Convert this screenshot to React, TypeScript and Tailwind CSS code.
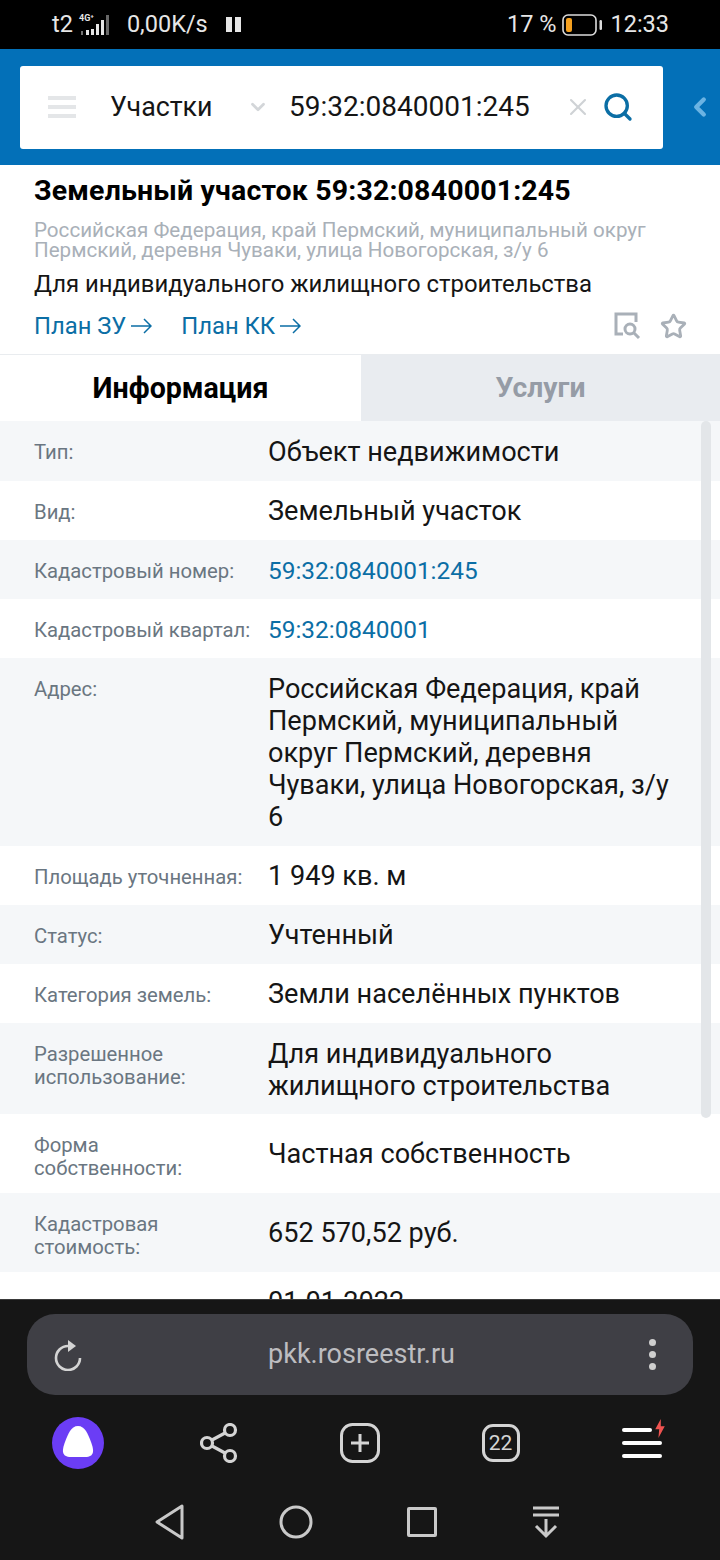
import { ReactNode } from "react";
import { ChevronDown, ChevronLeft, Search, X, Star } from "lucide-react";

interface Row {
  label: ReactNode;
  value: ReactNode;
  h: string;
  pos: string;
  link?: boolean;
}

const rows: Row[] = [
  { label: "Тип:", value: "Объект недвижимости", h: "h-[60px]", pos: "pt-[15px]" },
  { label: "Вид:", value: "Земельный участок", h: "h-[59px]", pos: "pt-[14px]" },
  { label: "Кадастровый номер:", value: "59:32:0840001:245", h: "h-[59px]", pos: "pt-[15px]", link: true },
  {
    label: <span className="whitespace-nowrap">Кадастровый квартал:</span>,
    value: "59:32:0840001",
    h: "h-[59px]",
    pos: "pt-[15px]",
    link: true,
  },
  {
    label: "Адрес:",
    value: "Российская Федерация, край Пермский, муниципальный округ Пермский, деревня Чуваки, улица Новогорская, з/у 6",
    h: "h-[188px]",
    pos: "pt-[15px]",
  },
  { label: "Площадь уточненная:", value: "1 949 кв. м", h: "h-[59px]", pos: "pt-[14px]" },
  { label: "Статус:", value: "Учтенный", h: "h-[59px]", pos: "pt-[14px]" },
  { label: "Категория земель:", value: "Земли населённых пунктов", h: "h-[59px]", pos: "pt-[14px]" },
  { label: "Разрешенное использование:", value: "Для индивидуального жилищного строительства", h: "h-[91px]", pos: "pt-[15px]" },
  { label: "Форма собственности:", value: "Частная собственность", h: "h-[79px]", pos: "self-center" },
  { label: "Кадастровая стоимость:", value: "652 570,52 руб.", h: "h-[79px]", pos: "self-center" },
  { label: "", value: "01.01.2022", h: "h-[79px]", pos: "pt-[14px]" },
];

const InfoRow = ({ row, odd }: { row: Row; odd: boolean }) => (
  <div className={`flex items-start pl-[34px] pr-[44px] ${row.h} ${odd ? "bg-white" : "bg-[#f5f7f9]"}`}>
    <div className="w-[234px] shrink-0 pt-[19.6px] pr-[18px] text-[20.3px] leading-[23px] text-[#6a7681]">{row.label}</div>
    <div className={`leading-[32px] ${row.pos} ${row.link ? "text-[24.4px] text-[#0b6ea5]" : "text-[27.1px] text-[#151515]"}`}>
      {row.value}
    </div>
  </div>
);

const ThinArrow = () => (
  <svg width="21" height="16" viewBox="0 0 21 16" fill="none" stroke="#0b6ea5" strokeWidth="1.5" className="ml-[5px]">
    <path d="M0 8h20M13 1l7 7-7 7" />
  </svg>
);

export default function App() {
  return (
    <div className="w-[720px] h-[1560px] flex flex-col overflow-hidden bg-white font-['Roboto',sans-serif]">
      {/* status bar */}
      <div className="h-[49px] bg-black flex items-center justify-between pl-[52px] pr-[51px] text-[23.5px] text-[#e6e6e6] shrink-0">
        <div className="flex items-center">
          <span>t2</span>
          <svg width="34" height="26" viewBox="0 0 34 26" className="ml-[5px] mr-[15px]" fill="#e6e6e6">
            <text x="1" y="9" fontSize="9" fontWeight="700" fontFamily="Roboto">4G⁺</text>
            <rect x="3" y="19" width="2" height="4" opacity="0.5" />
            <rect x="8" y="18" width="3" height="5" />
            <rect x="13" y="17" width="3" height="6" />
            <rect x="18" y="12" width="3" height="11" />
            <rect x="23" y="8" width="3" height="15" />
            <rect x="28" y="3" width="3" height="20" opacity="0.45" />
          </svg>
          <span>0,00K/s</span>
          <span className="flex gap-[3px] ml-[18px]">
            <span className="w-[6px] h-[15px] bg-[#e6e6e6]" />
            <span className="w-[6px] h-[15px] bg-[#e6e6e6]" />
          </span>
        </div>
        <div className="flex items-center">
          <span>17 %</span>
          <svg width="41" height="22" viewBox="0 0 41 22" className="ml-[6px] mr-[7px]" fill="none">
            <rect x="1" y="1" width="33" height="20" rx="5" stroke="#dcdcdc" strokeWidth="1.6" />
            <rect x="4" y="4" width="6" height="14" rx="2" fill="#f5a01f" />
            <rect x="37.5" y="6" width="2.5" height="10" rx="1.2" fill="#dcdcdc" />
          </svg>
          <span>12:33</span>
        </div>
      </div>

      {/* blue search header */}
      <div className="h-[116px] bg-[#0370b8] flex items-center pl-[20px] shrink-0">
        <div className="w-[643px] h-[83px] bg-white rounded-[3px] flex items-center pl-[28px]">
          <div className="flex flex-col gap-[5px] w-[28px]">
            <span className="h-[4px] bg-[#e4e6e8]" />
            <span className="h-[4px] bg-[#e4e6e8]" />
            <span className="h-[4px] bg-[#e4e6e8]" />
          </div>
          <span className="ml-[34px] text-[26.8px] text-[#151515] w-[137px]">Участки</span>
          <ChevronDown size={22} strokeWidth={3} className="text-[#d3d6d9]" />
          <span className="ml-[20px] text-[28px] text-[#151515] w-[275px] whitespace-nowrap">59:32:0840001:245</span>
          <X size={28} strokeWidth={1.8} className="text-[#cfd2d5]" />
          <Search size={32} strokeWidth={2.5} className="ml-[10px] text-[#0b6ea5]" />
        </div>
        <ChevronLeft size={30} strokeWidth={3.5} className="ml-[22px] text-[#6bb3e3]" />
      </div>

      {/* object card */}
      <div className="h-[190px] px-[34px] shrink-0 border-b-[1px] border-[#e9ecef]">
        <div className="pt-[9px] text-[28.5px] leading-[34px] font-bold tracking-[0.15px] text-black whitespace-nowrap">
          Земельный участок 59:32:0840001:245
        </div>
        <div className="mt-[12px] text-[20.6px] leading-[20px] text-[#a9b0b8]">
          <div>Российская Федерация, край Пермский, муниципальный округ</div>
          <div>Пермский, деревня Чуваки, улица Новогорская, з/у 6</div>
        </div>
        <div className="mt-[9px] text-[23.9px] leading-[30px] text-[#151515]">Для индивидуального жилищного строительства</div>
        <div className="mt-[12px] flex items-center text-[23.8px] leading-[30px] text-[#0b6ea5]">
          <span>План ЗУ</span>
          <ThinArrow />
          <span className="ml-[29px]">План КК</span>
          <ThinArrow />
          <div className="ml-auto flex items-center gap-[17px] mr-[-1px]">
            <svg width="30" height="30" viewBox="0 0 30 30" fill="none" stroke="#a9b0b8" strokeWidth="3">
              <path d="M10 23H3V3h20v8" />
              <circle cx="17" cy="18" r="5" />
              <path d="M21 22l5 5" />
            </svg>
            <Star size={27} strokeWidth={2.5} className="text-[#a9b0b8]" />
          </div>
        </div>
      </div>

      {/* tabs */}
      <div className="h-[66px] flex shrink-0">
        <div className="w-[361px] flex items-center justify-center text-[28.6px] font-bold text-black bg-white">Информация</div>
        <div className="flex-1 flex items-center justify-center text-[28.3px] font-bold text-[#969ca6] bg-[#e9ecf0]">Услуги</div>
      </div>

      {/* rows */}
      <div className="relative flex-1 overflow-hidden">
        {rows.map((row, i) => (
          <InfoRow key={i} row={row} odd={i % 2 === 1} />
        ))}
        <div className="absolute right-[9px] top-0 w-[10px] h-[697px] rounded-full bg-[#e3e6e9]" />
      </div>

      {/* browser bar */}
      <div className="h-[261px] bg-[#161616] shrink-0 flex flex-col border-t-[1px] border-[#3a3a3a]">
        <div className="mt-[14px] mx-[27px] h-[81px] rounded-[28px] bg-[#3f3f45] flex items-center px-[26px]">
          <svg width="30" height="32" viewBox="0 0 30 32" fill="none" className="shrink-0">
            <path d="M27 19a12 12 0 1 1-12-12" stroke="#d4d4d4" strokeWidth="2.6" />
            <path d="M15 1l8 6-8 6z" fill="#d4d4d4" />
          </svg>
          <span className="flex-1 pr-[9px] text-center text-[27px] text-[#bdbdc0]">pkk.rosreestr.ru</span>
          <div className="flex flex-col gap-[5px] mr-[11px]">
            <span className="w-[7px] h-[7px] rounded-full bg-[#cfcfcf]" />
            <span className="w-[7px] h-[7px] rounded-full bg-[#cfcfcf]" />
            <span className="w-[7px] h-[7px] rounded-full bg-[#cfcfcf]" />
          </div>
        </div>

        <div className="mt-[21px] pl-[7px] grid grid-cols-[repeat(5,141px)] items-center justify-items-center h-[54px]">
          <svg width="52" height="52" viewBox="0 0 52 52">
            <circle cx="26" cy="26" r="26" fill="#6b3df5" />
            <path d="M26 9c7 0 10 8 13 16 3 8 4 15-6 15H19c-10 0-9-7-6-15 3-8 6-16 13-16z" fill="#fff" />
          </svg>
          <svg width="38" height="40" viewBox="0 0 38 40" fill="none" stroke="#d4d4d4" strokeWidth="3.2">
            <circle cx="7" cy="20" r="5.5" />
            <circle cx="30" cy="7" r="5.5" />
            <circle cx="30" cy="33" r="5.5" />
            <path d="M12 17l13-7M12 23l13 7" />
          </svg>
          <svg width="40" height="40" viewBox="0 0 40 40" fill="none" stroke="#d4d4d4" strokeWidth="3">
            <rect x="1.5" y="1.5" width="37" height="37" rx="11" />
            <path d="M20 11v18M11 20h18" />
          </svg>
          <div className="w-[38px] h-[38px] rounded-[11px] border-[3px] border-[#d4d4d4] flex items-center justify-center text-[21px] text-[#d4d4d4] leading-none">
            22
          </div>
          <div className="relative flex flex-col gap-[9px] w-[40px]">
            <span className="h-[4px] w-[30px] rounded-full bg-white" />
            <span className="h-[4px] rounded-full bg-white" />
            <span className="h-[4px] rounded-full bg-white" />
            <svg width="12" height="19" viewBox="0 0 14 24" className="absolute -right-[4px] -top-[9px]" fill="#ef5350">
              <path d="M8 0L1 13h5l-1 11 8-15H8z" />
            </svg>
          </div>
        </div>

        <div className="mt-[34px] flex items-center pl-[154px]">
          <svg width="32" height="36" viewBox="0 0 32 36" fill="none" stroke="#c9c9c9" strokeWidth="3" strokeLinejoin="round">
            <path d="M28 2v32L3 18z" />
          </svg>
          <svg width="34" height="34" viewBox="0 0 34 34" fill="none" stroke="#c9c9c9" strokeWidth="3" className="ml-[93px]">
            <circle cx="17" cy="17" r="15" />
          </svg>
          <div className="ml-[94px] w-[30px] h-[30px] rounded-[2px] border-[3px] border-[#c9c9c9]" />
          <svg width="30" height="34" viewBox="0 0 30 34" fill="none" stroke="#c9c9c9" strokeWidth="3" className="ml-[94px]">
            <path d="M2 3h26M2 10h26M15 14v17M5 21l10 10 10-10" />
          </svg>
        </div>
      </div>
    </div>
  );
}
